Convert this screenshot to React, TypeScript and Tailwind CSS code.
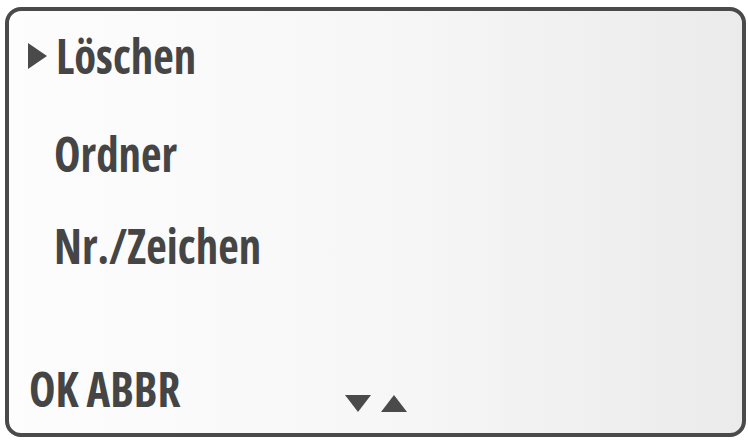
export default function App() {
  const txt =
    "inline-block origin-left scale-x-[0.935] font-['Open_Sans',sans-serif] font-stretch-condensed font-bold text-[48px] leading-[48px] text-[#454545] whitespace-nowrap";
  return (
    <div className="w-[748px] h-[440px] bg-white pl-[5px] pt-[7px]">
      <div className="w-[741px] h-[430px] rounded-[16px] border-[4px] border-[#4a4a4a] bg-linear-to-r from-[#fdfdfd] via-[#f7f7f7] to-[#ebebeb] flex flex-col justify-between pt-[21px] pb-[20px]">
        <div className="flex flex-col">
          <div className="flex items-center pl-[19px] gap-[9px]">
            <svg width="19" height="26" viewBox="0 0 19 26" className="shrink-0">
              <polygon points="0,0 19,13 0,26" fill="#4a4a4a" />
            </svg>
            <span className={txt}>Löschen</span>
          </div>
          <div className="pl-[45px] mt-[50px]">
            <span className={txt}>Ordner</span>
          </div>
          <div className="pl-[45px] mt-[44px]">
            <span className={txt}>Nr./Zeichen</span>
          </div>
        </div>
        <div className="flex items-end pl-[20px]">
          <span className={txt + " w-[316px] shrink-0"}>OK ABBR</span>
          <svg width="62" height="17" viewBox="0 0 62 17" className="mb-[1px] shrink-0">
            <polygon points="0,0 26,0 13,17" fill="#4a4a4a" />
            <polygon points="36,17 62,17 49,0" fill="#4a4a4a" />
          </svg>
        </div>
      </div>
    </div>
  );
}
